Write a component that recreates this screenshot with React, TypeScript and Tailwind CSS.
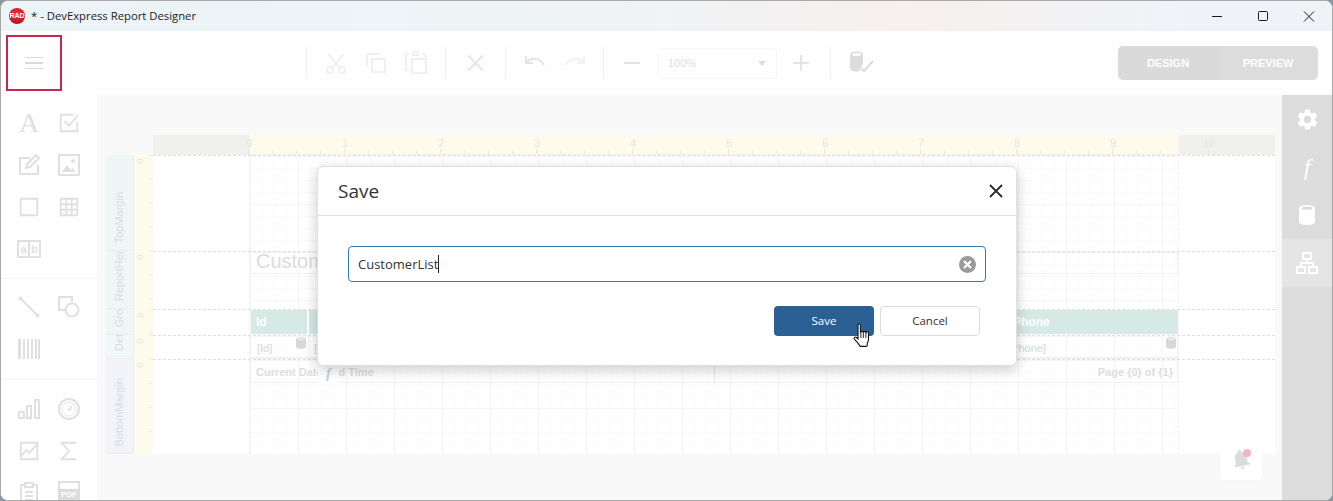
import { MdSettings, MdNotifications } from 'react-icons/md';

const bands = [
  { name: 'TopMargin', h: 'h-[96px]', bg: 'bg-[#eff7f6]' },
  { name: 'ReportHea', h: 'h-[58px]', bg: 'bg-[#eff7f6]' },
  { name: 'Gro', h: 'h-[26px]', bg: 'bg-[#eff7f6]' },
  { name: 'Det', h: 'h-[24px]', bg: 'bg-[#f0f8fa]' },
  { name: 'BottomMargin', h: 'h-[95px]', bg: 'bg-[#f2f4f9]' },
];

function Glyph({ children, size = 24, className = '' }: { children: React.ReactNode; size?: number; className?: string }) {
  return (
    <svg width={size} height={size} viewBox="0 0 24 24" fill="none" stroke="currentColor" strokeWidth="2" className={className}>
      {children}
    </svg>
  );
}

function DbIcon({ className = '' }: { className?: string }) {
  return (
    <svg width="10" height="12" viewBox="0 0 12 14" className={className}>
      <path d="M0 2.5C0 .8 3 0 6 0s6 .8 6 2.5v9c0 1.7-3 2.5-6 2.5s-6-.8-6-2.5z" fill="currentColor" />
      <ellipse cx="6" cy="2.6" rx="4.2" ry="1.3" fill="#fff" opacity=".55" />
    </svg>
  );
}

function HandCursor() {
  return (
    <svg width="20" height="26" viewBox="0 0 20 26" className="absolute left-[852px] top-[323px]">
      <path
        d="M6 2.2c0-1.6 2.4-1.6 2.4 0v7.2l.5-.1c0-1.5 2.3-1.5 2.3 0l.4.1c.1-1.4 2.2-1.3 2.3.1l.3.1c.2-1.2 2.2-1 2.3.4v6.5c0 1.700-.6 2.700-1.300 3.800v1.900c0 .8-.6 1.200-1.300 1.200H9c-.6 0-1-.3-1.300-.8-1.500-2.400-3.400-4.300-5.200-6.200-1.300-1.500.6-3.200 2-1.900L6 16z"
        fill="#fff"
        stroke="#111"
        strokeWidth="1.100"
      />
      <path d="M8.900 10v5M11.300 10v5M13.900 10v5" stroke="#111" strokeWidth=".9" />
    </svg>
  );
}

function TopRuler() {
  const ticks = Array.from({ length: 46 }, (_, i) => i);
  return (
    <div className="ml-[56px] mr-[7px] h-5 relative flex bg-[#fefaec] border-b border-[#f1f1f1]">
      <div className="w-[97px] bg-[#f0f0ec]" />
      <div className="flex-1" />
      <div className="w-[96px] bg-[#f0f0ec]" />
      {ticks.map((i) => (
        <span
          key={i}
          className={`absolute bottom-0 w-px ${i % 4 === 3 ? 'h-[5px] bg-[#e6e6e6]' : 'h-[3px] bg-[#eaeaea]'}`}
          style={{ left: 23 + i * 24 }}
        />
      ))}
      {Array.from({ length: 11 }, (_, i) => (
        <span
          key={i}
          className="absolute top-[1px] w-5 text-center text-[11px] leading-[14px] text-[#e6e6e6]"
          style={{ left: 86 + i * 96 }}
        >
          {i}
        </span>
      ))}
    </div>
  );
}

function Band({ band, children }: { band: (typeof bands)[number]; children?: React.ReactNode }) {
  const ticks = Array.from({ length: 4 }, (_, i) => i);
  return (
    <div className={`flex ${band.h} overflow-hidden`}>
      <div className={`w-[28px] ${band.bg} border-r border-b border-[#e9eef0] flex items-end justify-center overflow-hidden pb-[7px]`}>
        <span className="[writing-mode:vertical-rl] rotate-180 text-[11px] leading-none text-[#dcdcdc] whitespace-nowrap">{band.name}</span>
      </div>
      <div className="w-[19px] bg-[#fefaec] relative">
        <span className="absolute left-[3px] top-0 text-[9px] leading-[12px] text-[#e6e6e6] rotate-90">0</span>
        {ticks.map((i) => (
          <span key={i} className="absolute right-0 h-px w-[4px] bg-[#e9e9e9]" style={{ top: i * 24 }} />
        ))}
      </div>
      <div className="flex-1 flex border-t border-dashed border-[#dedede] bg-white">
        <div className="w-[96px]" />
        <div className="w-[930px] relative border-x border-dashed border-[#f1f1f1] bg-[linear-gradient(#f5f5f5_1px,transparent_1px),linear-gradient(90deg,#f5f5f5_1px,transparent_1px),linear-gradient(#fafafa_1px,transparent_1px),linear-gradient(90deg,#fafafa_1px,transparent_1px)] bg-[size:48px_48px,48px_48px,12px_12px,12px_12px]">
          {children}
        </div>
        <div className="flex-1" />
      </div>
    </div>
  );
}

function ToolSep() {
  return <div className="w-px h-[32px] bg-[#efefef]" />;
}

export default function App() {
  return (
    <div className="w-[1333px] h-[501px] bg-[#8d96a0] relative overflow-hidden font-['Noto_Sans',sans-serif]">
      <div className="h-full border border-[#a8a8a8] rounded-lg overflow-hidden flex flex-col bg-white">
        {/* title bar */}
        <div className="h-[30px] shrink-0 flex items-center bg-[linear-gradient(90deg,#ebf4f7_0%,#eff3f6_45%,#f6f0ee_68%,#eff3f8_90%)]">
          <div className="ml-2 w-4 h-4 rounded-full bg-[radial-gradient(circle_at_50%_35%,#f0303a,#a80d18)] flex items-center justify-center text-[7px] font-bold text-white font-['Liberation_Sans',sans-serif]">
            RAD
          </div>
          <span className="ml-[6px] text-[11.300px] text-[#1c1c1c] font-['Open_Sans',sans-serif]">* - DevExpress Report Designer</span>
          <div className="ml-auto flex items-center text-[#1a1a1a]">
            <svg width="46" height="30" viewBox="0 0 46 30"><path d="M18 15.500h10" stroke="currentColor" /></svg>
            <svg width="46" height="30" viewBox="0 0 46 30"><rect x="18.500" y="10.500" width="9" height="9" rx="1" fill="none" stroke="currentColor" /></svg>
            <svg width="46" height="30" viewBox="0 0 46 30"><path d="M18 10.500l10 10M28 10.500l-10 10" stroke="currentColor" /></svg>
          </div>
        </div>

        {/* toolbar */}
        <div className="h-[64px] shrink-0 flex items-center bg-[#fefefe] relative">
          <div className="ml-[5px] w-14 h-[56px] border-2 border-[#c6294f] flex flex-col items-center justify-center gap-[4px]">
            <span className="w-[18px] h-[1.5px] bg-[#dcdcdc]" />
            <span className="w-[18px] h-[1.5px] bg-[#dcdcdc]" />
            <span className="w-[18px] h-[1.5px] bg-[#dcdcdc]" />
          </div>
          <div className="ml-[244px]"><ToolSep /></div>
          <div className="w-[138px] flex items-center justify-around px-[9px] text-[#f0f0f0]">
            <Glyph>
              <circle cx="6" cy="19" r="3" /><circle cx="18" cy="19" r="3" /><path d="M8 17L20 3M16 17L4 3" />
            </Glyph>
            <Glyph>
              <path d="M3 16V3h13M8 8h13v13H8z" />
            </Glyph>
            <Glyph>
              <path d="M5 3H2v16h3M18 3h3v3M9 1h5v3H9zM8 8h14v14H8z" />
            </Glyph>
          </div>
          <ToolSep />
          <div className="w-[59px] flex justify-center text-[#e6e6e6]">
            <Glyph><path d="M4 4.500l15 15M19 4.500L4 19.500" /></Glyph>
          </div>
          <ToolSep />
          <div className="w-[97px] flex justify-center gap-4 px-[5px]">
            <Glyph className="text-[#e4e4e4]"><path d="M3 5v7h7M4 12c2-5 12-7 17 2" /></Glyph>
            <Glyph className="text-[#f2f2f2]"><path d="M21 5v7h-7M20 12c-2-5-12-7-17 2" /></Glyph>
          </div>
          <ToolSep />
          <div className="flex items-center w-[226px]">
            <Glyph className="ml-[17px] text-[#e4e4e4]"><path d="M3 12h16" /></Glyph>
            <div className="ml-[13px] w-[119px] h-[31px] border border-[#f5f5f5] rounded-[4px] flex items-center justify-between pl-[9px] pr-[10px] text-[11px] text-[#dedede] font-['Liberation_Sans',sans-serif]">
              100%
              <span className="w-0 h-0 border-x-[4px] border-x-transparent border-t-[5px] border-t-[#dcdcdc]" />
            </div>
            <Glyph className="ml-[12px] text-[#e4e4e4]"><path d="M12 4v16M4 12h16" /></Glyph>
          </div>
          <ToolSep />
          <div className="ml-[18px] relative w-6 h-6">
            <svg width="26" height="24" viewBox="0 0 26 24" className="text-[#dcdcdc]">
              <path d="M1 3.500C1 1.500 4 .5 7.500.5S14 1.500 14 3.500v10l-4 4 1.500 2c-1 .7-2.500 1-4 1-3.500 0-6.500-1-6.500-3z" fill="currentColor" />
              <ellipse cx="7.500" cy="3.500" rx="4.500" ry="1.500" fill="#fff" />
              <path d="M11 16l4 4 9-10" fill="none" stroke="currentColor" strokeWidth="2" />
            </svg>
          </div>
          <div className="ml-auto mr-[14px] flex w-[200px] h-[34px] rounded-[5px] overflow-hidden text-white font-bold text-[11px] font-['Liberation_Sans',sans-serif]">
            <div className="w-[100px] bg-[#dadada] flex items-center justify-center">DESIGN</div>
            <div className="w-[100px] bg-[#dcdcdc] flex items-center justify-center">PREVIEW</div>
          </div>
        </div>

        {/* body */}
        <div className="flex-1 flex min-h-0">
          {/* toolbox */}
          <div className="w-[96px] shrink-0 bg-[#fefefe] overflow-hidden text-[#e0e0e0] flex flex-col">
            <div className="border-b border-[#f5f5f5] pt-[7px] pb-[8px] pl-2 grid grid-cols-[40px_40px] auto-rows-[42px] place-items-center">
              <span className="font-['Liberation_Serif',serif] text-[28px] leading-none">A</span>
              <Glyph size={22}><path d="M21 11v10H3V3h14M7 10l5 5L22 3" /></Glyph>
              <Glyph size={24}><path d="M21 12v9H3V5h10M9 15l1-4L19 2l3 3-9 9z" /></Glyph>
              <svg width="22" height="22" viewBox="0 0 22 22"><rect x="1" y="1" width="20" height="20" fill="none" stroke="currentColor" strokeWidth="2" /><path d="M4 18l5-7 4 5 2-2 3 4z" fill="currentColor" /><circle cx="15" cy="7" r="2" fill="currentColor" /></svg>
              <Glyph size={22}><path d="M3 3h18v18H3z" /></Glyph>
              <Glyph size={22}><path d="M3 3h18v18H3zM3 9h18M3 15h18M9 3v18M15 3v18" /></Glyph>
              <div className="w-6 h-[18px] border-2 border-[#e0e0e0] flex text-[11px] leading-[14px] font-bold font-['Liberation_Sans',sans-serif]">
                <span className="flex-1 text-center border-r-2 border-[#e0e0e0]">a</span>
                <span className="flex-1 text-center">b</span>
              </div>
            </div>
            <div className="border-b border-[#f5f5f5] pt-[7px] pb-[9px] pl-2 grid grid-cols-[40px_40px] auto-rows-[42px] place-items-center">
              <svg width="22" height="22" viewBox="0 0 22 22"><path d="M2 2l18 18" stroke="currentColor" strokeWidth="2" /><circle cx="2.500" cy="2.500" r="2" fill="currentColor" /><circle cx="19.500" cy="19.500" r="2" fill="currentColor" /></svg>
              <svg width="22" height="22" viewBox="0 0 22 22"><path d="M7 14H1V1h13v5" fill="none" stroke="currentColor" strokeWidth="2" /><circle cx="14" cy="14" r="6.500" fill="none" stroke="currentColor" strokeWidth="2" /></svg>
              <svg width="22" height="20" viewBox="0 0 22 20"><path d="M0 0h3v20H0zM5 0h2v20H5zM9 0h2v20H9zM13 0h2v20h-2zM17 0h2v20h-2zM20 0h2v20h-2z" fill="currentColor" /></svg>
            </div>
            <div className="pt-[8px] pl-2 grid grid-cols-[40px_40px] auto-rows-[42px] place-items-center">
              <svg width="22" height="20" viewBox="0 0 22 20"><path d="M1 13h5v6H1zM9 7h4v12H9zM17 1h4v18h-4z" fill="none" stroke="currentColor" strokeWidth="2" /></svg>
              <svg width="22" height="22" viewBox="0 0 22 22"><circle cx="11" cy="11" r="10" fill="none" stroke="currentColor" strokeWidth="2" /><circle cx="11" cy="11" r="7" fill="none" stroke="currentColor" strokeWidth=".8" /><path d="M9 12l6-6-3 7z" fill="currentColor" /></svg>
              <Glyph size={22}><path d="M3 3h18v18H3zM3 18l6-7 3 3 9-9" /></Glyph>
              <Glyph size={22}><path d="M20 3H4l8 9-8 9h16" /></Glyph>
              <Glyph size={24}><path d="M8 4H4v18h16V4h-4M8 2h8v4H8zM8 11h8M8 15h8M8 19h8" /></Glyph>
              <div className="relative w-[22px] h-[24px] border-2 border-[#e0e0e0]">
                <span className="absolute -left-[2px] top-[6px] w-[22px] bg-[#dcdcdc] text-white text-[8px] leading-[11px] font-bold text-center font-['Liberation_Sans',sans-serif]">PDF</span>
              </div>
            </div>
          </div>

          {/* design surface */}
          <div className="flex-1 bg-[#f9f9f9] pt-10 min-w-0 relative font-['Liberation_Sans',sans-serif]">
            <TopRuler />
            <div className="ml-[9px] mr-[7px]">
              <Band band={bands[0]} />
              <Band band={bands[1]}>
                <div className="absolute inset-x-0 top-0 h-[22px] border border-[#f0f0f0] pl-[5px] text-[20px] leading-[17px] text-[#dcdcdc]">Customer List</div>
              </Band>
              <Band band={bands[2]}>
                <div className="absolute left-[1px] right-0 top-0 h-[24px] bg-[#d5e9e5] flex text-[12px] font-bold text-white leading-[25px]">
                  <span className="w-[58px] pl-[5px] border-r-2 border-white">Id</span>
                  <span className="flex-1 pl-[704px]">Phone</span>
                </div>
              </Band>
              <Band band={bands[3]}>
                <div className="absolute inset-x-0 top-0 h-[23px] border-b-2 border-x border-[#f0f0f0] text-[11px] leading-[24px] text-[#d6d6d6]">
                  <span className="absolute left-[6px]">[Id]</span>
                  <span className="absolute left-[57px] h-full w-px bg-[#f0f0f0]" />
                  <span className="absolute left-[63px]">[</span>
                  <span className="absolute right-[131px]">[Phone]</span>
                  <DbIcon className="absolute left-[45px] top-[1px] text-[#d8d8d8]" />
                  <DbIcon className="absolute right-[1px] top-[1px] text-[#d8d8d8]" />
                </div>
              </Band>
              <Band band={bands[4]}>
                <div className="absolute inset-x-0 top-0 h-[23px] border-b border-x border-[#f0f0f0] flex text-[11px] font-bold leading-[24px] text-[#dedede]">
                  <span className="w-[464px] pl-[5px] border-r border-[#e4e4e4] whitespace-nowrap">Current Date and Time</span>
                  <span className="flex-1 text-right pr-[4px]">Page {'{0}'} of {'{1}'}</span>
                  <span className="absolute left-[67px] top-[3px] w-[21px] h-[20px] bg-white flex items-center justify-center font-['Liberation_Serif',serif] italic text-[15px] leading-none text-[#c5d3e6]">f</span>
                </div>
              </Band>
            </div>
            <div className="absolute left-[1123px] top-[343px] w-[42px] h-[42px] rounded-md bg-white flex items-center justify-center shadow-[0_0_6px_rgba(0,0,0,0.02)]">
              <MdNotifications size={24} className="text-[#dcdcdc] -rotate-12" />
              <span className="absolute right-[11px] top-[11px] w-2 h-2 rounded-full bg-[#f4b4c6]" />
            </div>
          </div>

          {/* right tabs */}
          <div className="w-[50px] shrink-0 bg-[#dcdcdc] flex flex-col text-white">
            <div className="h-[48px] flex items-center justify-center"><MdSettings size={25} /></div>
            <div className="h-[48px] flex items-center justify-center font-['Liberation_Serif',serif] italic text-[24px]">f</div>
            <div className="h-[48px] flex items-center justify-center">
              <svg width="16" height="20" viewBox="0 0 16 20"><path d="M0 3c0-2 4-3 8-3s8 1 8 3v14c0 2-4 3-8 3s-8-1-8-3z" fill="currentColor" /><ellipse cx="8" cy="3.200" rx="5.500" ry="1.600" fill="#dcdcdc" /></svg>
            </div>
            <div className="h-[48px] flex items-center justify-center bg-[#e5e5e5]">
              <svg width="22" height="22" viewBox="0 0 22 22" fill="none" stroke="currentColor" strokeWidth="2"><path d="M7 1h8v6H7zM1 15h8v6H1zM13 15h8v6h-8zM11 7v4M5 15v-4h12v4" /></svg>
            </div>
          </div>
        </div>
      </div>

      {/* save dialog */}
      <div className="absolute left-[317px] top-[166px] w-[700px] h-[200px] bg-white border border-[#dfdfdf] rounded-[6px] shadow-[0_4px_14px_rgba(0,0,0,0.2)] flex flex-col font-['Open_Sans',sans-serif]">
        <div className="h-[49px] shrink-0 border-b border-[#dedede] flex items-center justify-between pl-5 pr-3">
          <span className="text-[19px] text-[#333]">Save</span>
          <svg width="16" height="16" viewBox="0 0 16 16"><path d="M2 2l12 12M14 2L2 14" stroke="#2b2b2b" strokeWidth="1.800" /></svg>
        </div>
        <div className="flex-1 px-[30px] pt-[30px] flex flex-col">
          <div className="h-[36px] border border-[#337ab7] rounded-[4px] flex items-center pl-[9px] pr-[9px]">
            <span className="text-[13px] text-[#333] leading-[20px]">CustomerList</span>
            <span className="w-px h-[18px] bg-[#222]" />
            <span className="ml-auto w-[17px] h-[17px] rounded-full bg-[#9a9a9a] flex items-center justify-center">
              <svg width="9" height="9" viewBox="0 0 9 9"><path d="M1 1l7 7M8 1L1 8" stroke="#fff" strokeWidth="2.200" /></svg>
            </span>
          </div>
          <div className="mt-6 flex justify-end gap-[6px] pr-[6px]">
            <button className="w-[100px] h-[30px] rounded-[4px] bg-[#2b6094] text-white text-[11.500px]">Save</button>
            <button className="w-[100px] h-[30px] rounded-[4px] bg-white border border-[#dcdcdc] text-[#333] text-[11.500px]">Cancel</button>
          </div>
        </div>
      </div>
      <HandCursor />
    </div>
  );
}
